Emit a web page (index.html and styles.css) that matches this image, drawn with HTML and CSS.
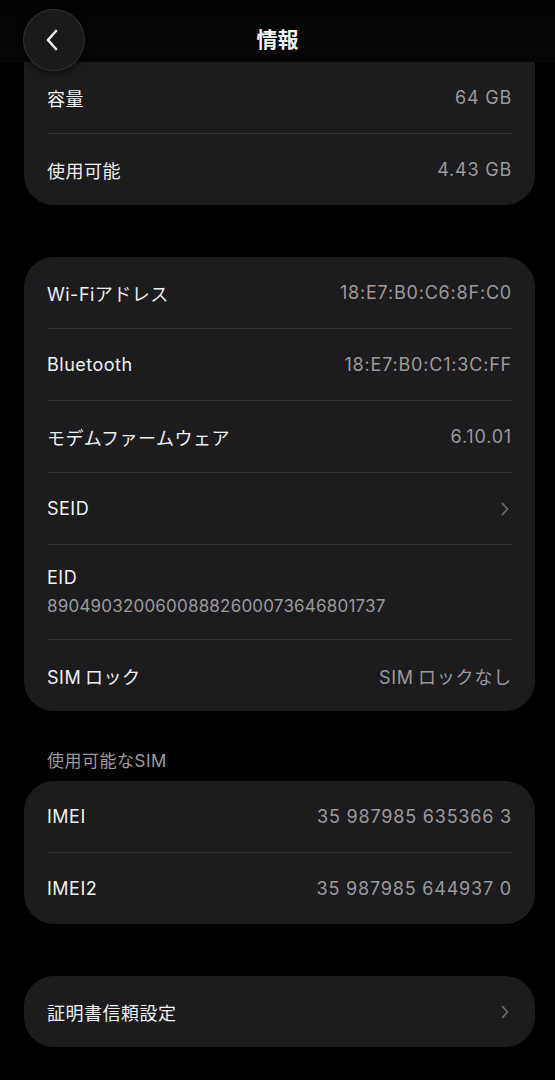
FILE: index.html
```html
<!DOCTYPE html>
<html lang="ja">
<head>
    <meta charset="UTF-8" />
    <meta name="viewport" content="width=device-width, initial-scale=1" />
    <title>情報</title>
    <link rel="stylesheet" href="styles.css">
</head>
<body>
<div class="screen">
    <div class="topbar">
        <button class="back" aria-label="戻る">
            <svg width="16" height="24" viewBox="0 0 16 24"><path d="M12 3 L4 12 L12 21" fill="none" stroke="#f2f2f2" stroke-width="2.6" stroke-linecap="round" stroke-linejoin="round"/></svg>
        </button>
        <div class="title">情報</div>
    </div>

    <div class="content">
        <div class="card card-first">
            <div class="row"><span class="label">容量</span><span class="value">64 GB</span></div>
            <div class="row"><span class="label">使用可能</span><span class="value">4.43 GB</span></div>
        </div>

        <div class="card">
            <div class="row"><span class="label">Wi-Fiアドレス</span><span class="value">18:E7:B0:C6:8F:C0</span></div>
            <div class="row"><span class="label">Bluetooth</span><span class="value">18:E7:B0:C1:3C:FF</span></div>
            <div class="row"><span class="label">モデムファームウェア</span><span class="value">6.10.01</span></div>
            <div class="row"><span class="label">SEID</span><span class="chevron"><svg width="8" height="14" viewBox="0 0 8 14"><path d="M1.5 1.5 L6.5 7 L1.5 12.5" fill="none" stroke="#6a696c" stroke-width="1.8" stroke-linecap="round" stroke-linejoin="round"/></svg></span></div>
            <div class="row row-stack">
                <span class="label">EID</span>
                <span class="value">89049032006008882600073646801737</span>
            </div>
            <div class="row"><span class="label">SIM&thinsp;ロック</span><span class="value">SIM&thinsp;ロックなし</span></div>
        </div>

        <div class="section-title">使用可能なSIM</div>
        <div class="card">
            <div class="row"><span class="label">IMEI</span><span class="value">35 987985 635366 3</span></div>
            <div class="row"><span class="label">IMEI2</span><span class="value">35 987985 644937 0</span></div>
        </div>

        <div class="card">
            <div class="row"><span class="label">証明書信頼設定</span><span class="chevron"><svg width="8" height="14" viewBox="0 0 8 14"><path d="M1.5 1.5 L6.5 7 L1.5 12.5" fill="none" stroke="#6a696c" stroke-width="1.8" stroke-linecap="round" stroke-linejoin="round"/></svg></span></div>
        </div>
    </div>
</div>
</body>
</html>
```

FILE: styles.css
```css
:root {
    --bg: #000;
    --card-bg: #1c1b1d;
    --text: #f1f1f1;
    --muted: #9b9a9d;
    --divider: #343336;
}
html, body {
    margin: 0;
    padding: 0;
    background-color: var(--bg);
}
body {
    font-family: Inter, "Noto Sans CJK JP", sans-serif;
    color: var(--text);
    width: 555px;
    height: 1080px;
    overflow: hidden;
}
.screen {
    position: relative;
}
.topbar {
    position: absolute;
    top: 0;
    left: 0;
    right: 0;
    height: 61px;
    background: linear-gradient(to bottom, #020202 0%, #060607 100%);
    border-bottom: 1px solid rgba(255, 255, 255, 0.035);
    z-index: 2;
}
.back {
    position: absolute;
    left: 23px;
    top: 9px;
    width: 62px;
    height: 62px;
    border-radius: 50%;
    border: 1px solid rgba(255, 255, 255, 0.1);
    background-color: #1a191c;
    box-shadow: 0 2px 8px rgba(0, 0, 0, 0.6);
    display: flex;
    align-items: center;
    justify-content: center;
    padding: 0 4px 0 0;
}
.title {
    text-align: center;
    padding-top: 26px;
    font-size: 21px;
    line-height: 28px;
    font-weight: 700;
    color: #f4f4f4;
}
.content {
    padding: 62px 20px 0 24px;
}
.card {
    background-color: var(--card-bg);
    border-radius: 30px;
    padding: 0 23px;
    margin-bottom: 52px;
}
.card-first {
    border-radius: 0 0 30px 30px;
}
.row {
    display: flex;
    align-items: center;
    justify-content: space-between;
    height: 71px;
}
.row + .row {
    border-top: 1px solid var(--divider);
}
.label {
    font-size: 18px;
    letter-spacing: 0.5px;
    color: var(--text);
}
.value {
    font-size: 18px;
    letter-spacing: 0.8px;
    color: var(--muted);
}
.chevron {
    display: flex;
    align-items: center;
    padding-right: 3px;
}
.row-stack {
    flex-direction: column;
    align-items: flex-start;
    justify-content: center;
    height: 94px;
    gap: 4px;
}
.row-stack .label {
    line-height: 24px;
}
.row-stack .value {
    line-height: 24px;
    font-size: 17px;
    letter-spacing: 0.2px;
}
.section-title {
    font-size: 17px;
    line-height: 20px;
    letter-spacing: 0.5px;
    color: var(--muted);
    padding-left: 23px;
    margin: -12px 0 10px;
}
```
